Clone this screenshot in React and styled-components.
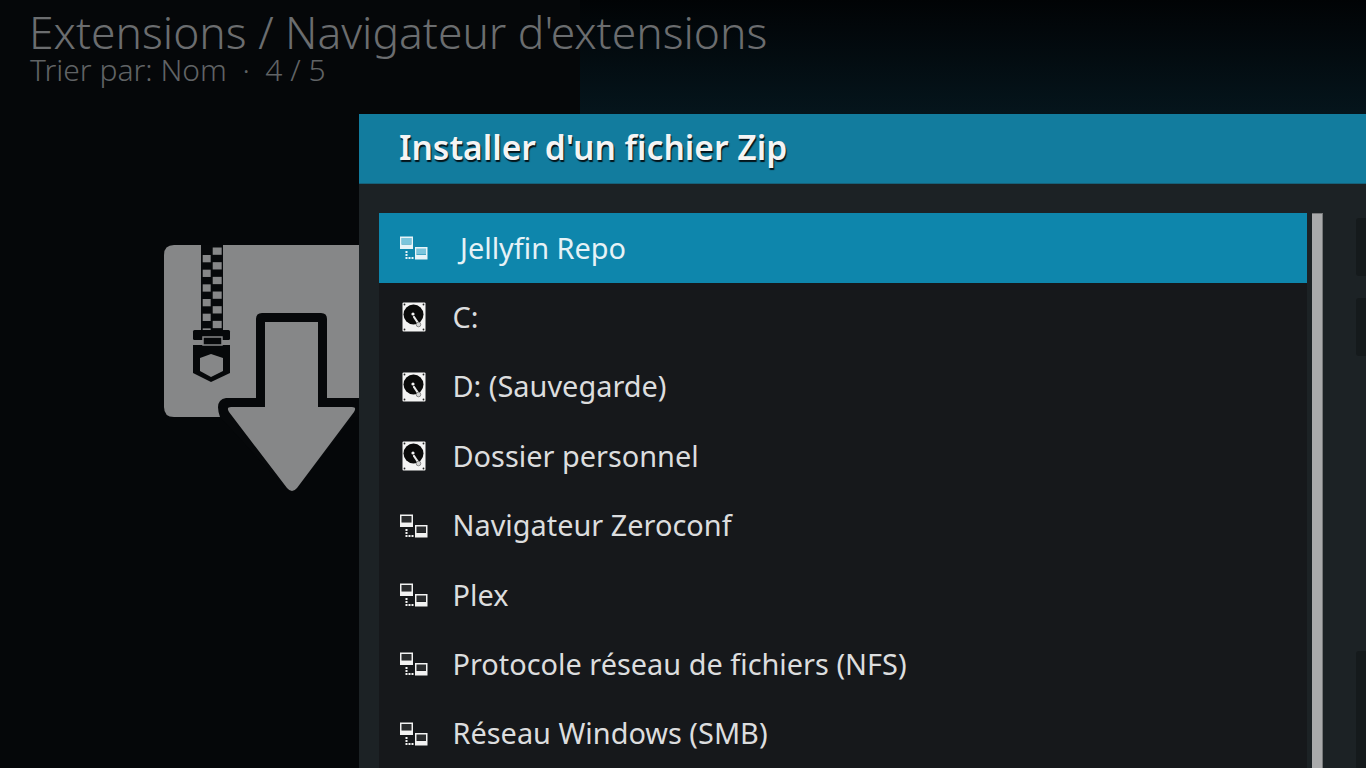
import React from "react";
import styled, { createGlobalStyle } from "styled-components";

const Global = createGlobalStyle`
  html, body { margin: 0; padding: 0; height: 100%; overflow: hidden; background: #050709; }
  #root { height: 100%; }
`;

const items = [
  { label: "Jellyfin Repo", icon: "net", active: true },
  { label: "C:", icon: "disk" },
  { label: "D: (Sauvegarde)", icon: "disk" },
  { label: "Dossier personnel", icon: "disk" },
  { label: "Navigateur Zeroconf", icon: "net" },
  { label: "Plex", icon: "net" },
  { label: "Protocole réseau de fichiers (NFS)", icon: "net" },
  { label: "Réseau Windows (SMB)", icon: "net" },
];

const Screen = styled.div`
  width: 1366px;
  height: 768px;
  overflow: hidden;
  display: flex;
  flex-direction: column;
  font-family: "Noto Sans", "Open Sans", sans-serif;
  background:
    linear-gradient(90deg, #050709 0, #050709 580px, transparent 580px),
    linear-gradient(180deg, #010305 0, #05151c 114px);
`;

const Header = styled.header`
  height: 114px;
  flex: none;
  padding-left: 29px;
  box-sizing: border-box;
  color: #6b6d6f;
`;

const Title = styled.div`
  font-size: 44.4px;
  font-weight: 300;
  line-height: 44px;
  padding-top: 10px;
`;

const Subtitle = styled.div`
  font-size: 30px;
  font-weight: 300;
  line-height: 28px;
  margin: 2px 0 0 1px;
  color: #606365;
`;

const Body = styled.div`
  flex: 1;
  display: flex;
  min-height: 0;
  background: #050709;
`;

const Side = styled.div`
  width: 359px;
  flex: none;
  padding: 131px 0 0 164px;
  box-sizing: border-box;
`;

const Dialog = styled.section`
  flex: 1;
  display: flex;
  flex-direction: column;
  background: #1c2225;
`;

const DialogHead = styled.div`
  height: 70px;
  flex: none;
  box-sizing: border-box;
  padding: 0 0 3px 40px;
  display: flex;
  align-items: center;
  background: #127c9e;
  border-bottom: 1px solid #16617a;
  color: #f4f4f4;
  font-size: 33.6px;
  font-weight: 600;
  text-shadow: 1px 2px 1px #04141a;
`;

const DialogBody = styled.div`
  flex: 1;
  display: flex;
  padding: 29px 0 0 20px;
  min-height: 0;
`;

const List = styled.div`
  width: 928px;
  flex: none;
  display: flex;
  flex-direction: column;
  background: #16181b;
`;

const Row = styled.div`
  height: 70px;
  flex: none;
  box-sizing: border-box;
  margin-bottom: -0.6px;
  display: flex;
  align-items: center;
  padding-left: 20px;
  background: ${(p) => (p.$active ? "#0e86ac" : "transparent")};
  font-size: 28.9px;
`;

const IconBox = styled.span`
  width: 30px;
  height: 30px;
  flex: none;
  display: flex;
`;

const Label = styled.span`
  margin-left: ${(p) => (p.$active ? "31px" : "23.5px")};
  padding-bottom: 2px;
  color: ${(p) => (p.$active ? "#e6f2f6" : "#dcddde")};
  white-space: nowrap;
`;

const Scrollbar = styled.div`
  width: 11px;
  flex: none;
  margin-left: 5px;
  background: #a9aaab;
  border-right: 1px solid #77797a;
  border-top: 1px solid #77797a;
  box-sizing: border-box;
`;

const Rail = styled.div`
  width: 10px;
  margin-left: 33px;
  padding-top: 5px;
  flex: none;
  display: flex;
  flex-direction: column;
`;

const RailBlock = styled.div`
  height: ${(p) => p.$h}px;
  margin-bottom: ${(p) => p.$gap}px;
  flex: none;
  background: #151a1c;
  border-radius: 3px 0 0 3px;
`;

const NetIcon = ({ color, screen }) => (
  <svg width="30" height="30" viewBox="0 0 30 30">
    <rect x="2.5" y="4.500" width="10" height="6.500" fill={screen} />
    <rect x="17.500" y="15" width="10" height="6.500" fill={screen} />
    <g fill={color}>
      <path fillRule="evenodd" d="M1 3.500h13v12.500H1zM2.500 5v6.500h10V5z" />
      <path fillRule="evenodd" d="M16 14h12.500v12.500H16zM17.500 15.500V22h9.500v-6.500z" />
      <rect x="6.500" y="18" width="2" height="2" />
      <rect x="6.500" y="21" width="2" height="2" />
      <rect x="6.500" y="24" width="2" height="2" />
      <rect x="9.500" y="24" width="2" height="2" />
      <rect x="12.500" y="24" width="2" height="2" />
    </g>
  </svg>
);

const DiskIcon = () => (
  <svg width="30" height="30" viewBox="0 0 30 30">
    <rect x="3.500" y="0.500" width="23" height="29" rx="1" fill="#f4f4f4" />
    <circle cx="14.500" cy="12.500" r="10" fill="#0a0a0a" />
    <circle cx="14" cy="12" r="1.600" fill="#f4f4f4" />
    <path d="M15 15l4 6" stroke="#e8e8e8" strokeWidth="2.200" strokeLinecap="round" />
    <circle cx="19.500" cy="22.500" r="2.300" fill="#d6d6d6" stroke="#666" strokeWidth="0.700" />
    <g fill="#222">
      <circle cx="5.500" cy="2.500" r="0.900" />
      <circle cx="24.500" cy="2.500" r="0.900" />
      <circle cx="5.500" cy="27.500" r="0.900" />
      <circle cx="24.500" cy="27.500" r="0.900" />
    </g>
  </svg>
);

const teeth = Array.from({ length: 6 }, (_, n) => n);

const ZipArt = () => (
  <svg width="195" height="250" viewBox="0 0 195 250" style={{ display: "block" }}>
    <path d="M10 0H195V172H10Q0 172 0 162V10Q0 0 10 0Z" fill="#868788" />
    {/* zipper */}
    <rect x="37" y="0" width="22" height="88" fill="#06080a" />
    <g fill="#868788">
      {teeth.map((n) => (
        <rect key={`l${n}`} x="38.700" y={10 + n * 14.67} width="8" height="7.300" />
      ))}
      {teeth.map((n) => (
        <rect key={`r${n}`} x="48.700" y={2.5 + n * 14.67} width="9" height="7.300" />
      ))}
    </g>
    {/* slider */}
    <rect x="29" y="85" width="37" height="10" rx="1.500" fill="#06080a" />
    <path d="M29 100H66V128L47 137L29 128Z" fill="#06080a" />
    <rect x="29" y="95" width="37" height="5" fill="#868788" />
    <rect x="39" y="92" width="19" height="8" fill="#06080a" stroke="#868788" strokeWidth="1.500" />
    <path d="M47 109L59 113V126L47 132L36 126V113Z" fill="#868788" />
    {/* arrow */}
    <path
      d="M92 74Q92 68 98 68H157Q163 68 163 74V153H195V172H190L128 250L56 172Q50 155 62 153H92Z"
      fill="#06080a"
    />
    <path
      d="M101 77H154V162H188Q193 162 190 167L133 243Q128 249 123 243L65 167Q62 162 67 162H101Z"
      fill="#868788"
    />
  </svg>
);

const App = () => (
  <>
    <Global />
    <Screen>
      <Header>
        <Title>Extensions / Navigateur d'extensions</Title>
        <Subtitle>Trier par: Nom &nbsp;·&nbsp; 4 / 5</Subtitle>
      </Header>
      <Body>
        <Side>
          <ZipArt />
        </Side>
        <Dialog>
          <DialogHead>Installer d'un fichier Zip</DialogHead>
          <DialogBody>
            <List>
              {items.map((item) => (
                <Row key={item.label} $active={item.active}>
                  <IconBox>
                    {item.icon === "net" ? (
                      <NetIcon
                        color={item.active ? "#e8f4f8" : "#f2f2f2"}
                        screen={item.active ? "#7cc5dc" : "#2a2c2e"}
                      />
                    ) : (
                      <DiskIcon />
                    )}
                  </IconBox>
                  <Label $active={item.active}>{item.label}</Label>
                </Row>
              ))}
            </List>
            <Scrollbar />
            <Rail>
              <RailBlock $h={58} $gap={22} />
              <RailBlock $h={58} $gap={295} />
              <RailBlock $h={118} $gap={0} />
            </Rail>
          </DialogBody>
        </Dialog>
      </Body>
    </Screen>
  </>
);

export default App;
